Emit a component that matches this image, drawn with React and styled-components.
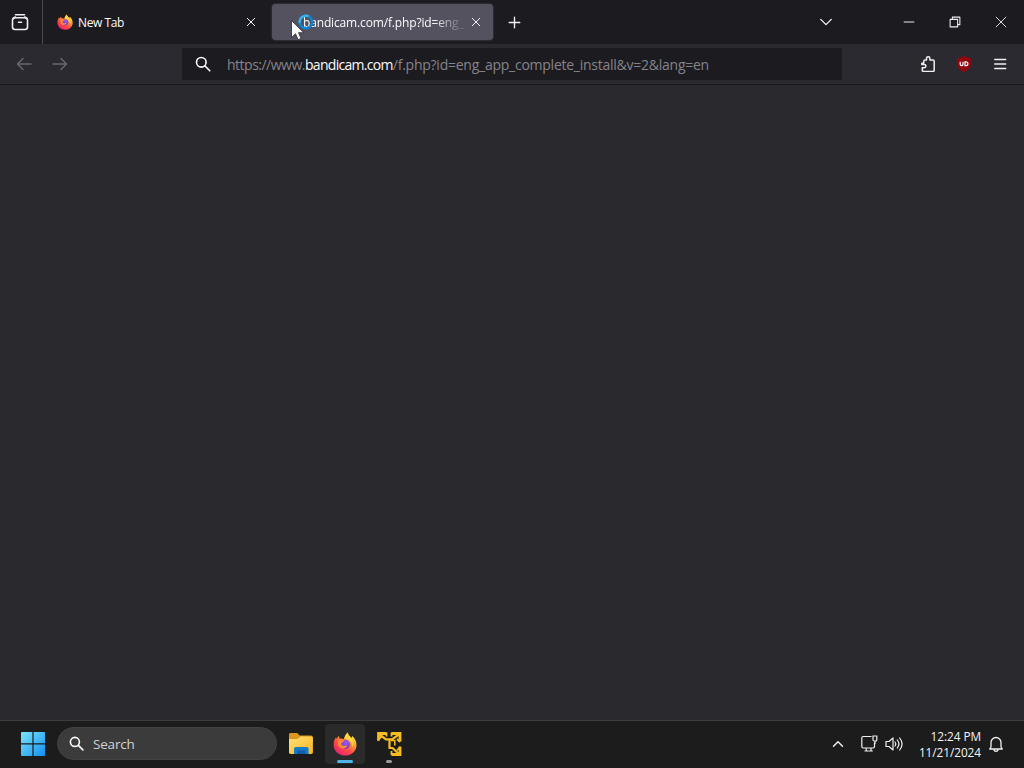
import React from "react";
import styled, { createGlobalStyle } from "styled-components";

const GlobalStyle = createGlobalStyle`
  * { box-sizing: border-box; }
  body { margin: 0; background: #2a292e; overflow: hidden; }
  svg { display: block; flex: none; }
`;

const Screen = styled.div`
  width: 1024px;
  height: 768px;
  display: flex;
  flex-direction: column;
  position: relative;
  font-family: "Open Sans", "Noto Sans", sans-serif;
  color: #fbfbfe;
  background: #2a292e;
`;

const TabBar = styled.header`
  height: 44px;
  display: flex;
  align-items: center;
  background: #1c1b20;
`;

const IconSlot = styled.div`
  width: ${(p) => p.$w}px;
  height: 100%;
  flex: none;
  display: flex;
  align-items: center;
  justify-content: center;
  color: ${(p) => p.$color || "#f0f0f2"};
`;

const ViewSlot = styled(IconSlot)`
  border-right: 1px solid #4c4b52;
  padding-right: 3px;
`;

const Tab = styled.div`
  width: 221px;
  height: 36px;
  margin-left: ${(p) => p.$gap}px;
  padding: 0 ${(p) => p.$end}px 0 ${(p) => p.$indent}px;
  display: flex;
  align-items: center;
  border-radius: 4px;
  background: ${(p) => (p.$active ? "#53525e" : "transparent")};
  box-shadow: ${(p) => (p.$active ? "0 0 2px #5c5b66" : "none")};
`;

const TabLabel = styled.span`
  flex: 1;
  margin-left: ${(p) => p.$gap || 0}px;
  padding-top: 2px;
  font-size: 12px;
  line-height: 18px;
  letter-spacing: ${(p) => p.$spacing || 0}px;
  white-space: nowrap;
  mask-image: ${(p) => (p.$fade ? "linear-gradient(to right, #000 80%, rgba(0, 0, 0, 0.15) 97%)" : "none")};
`;

const Spacer = styled.div`
  flex: 1;
`;

const NavBar = styled.nav`
  height: 41px;
  display: flex;
  align-items: center;
  padding-left: 6px;
  padding-right: 6px;
  background: #2b2a30;
  border-bottom: 1px solid #1a191d;
`;

const AddressBar = styled.div`
  width: 660px;
  height: 32px;
  margin-left: 104px;
  padding-left: 13px;
  display: flex;
  align-items: center;
  background: #1c1b20;
`;

const Url = styled.span`
  margin-left: 16px;
  padding-top: 2px;
  font-size: 14px;
  line-height: 20px;
  letter-spacing: -0.25px;
  white-space: nowrap;
  color: #85848a;
`;

const Scheme = styled.span`
  letter-spacing: -0.5px;
`;

const Host = styled.span`
  letter-spacing: -0.7px;
  color: #fbfbfe;
`;

const Page = styled.main`
  flex: 1;
  background: #2a292e;
`;

const Taskbar = styled.footer`
  height: 48px;
  display: flex;
  align-items: center;
  padding-left: 21px;
  padding-bottom: 2px;
  background: #1c1c1c;
  border-top: 1px solid #3d3d40;
`;

const SearchBox = styled.div`
  width: 220px;
  height: 33px;
  margin-left: 12px;
  margin-right: 4px;
  padding-left: 11px;
  display: flex;
  align-items: center;
  border-radius: 17px;
  background: #3b3b3b;
  border: 1px solid #424242;
`;

const SearchLabel = styled.span`
  margin-left: 9px;
  font-size: 13.5px;
  line-height: 20px;
  letter-spacing: -0.2px;
  color: #d2d2d2;
`;

const AppButton = styled.div`
  width: 40px;
  height: 40px;
  margin-left: ${(p) => p.$gap || 0}px;
  display: flex;
  align-items: center;
  justify-content: center;
  position: relative;
  border-radius: 4px;
  background: ${(p) => (p.$active ? "#2a2a2b" : "transparent")};
`;

const Indicator = styled.i`
  position: absolute;
  bottom: 1px;
  left: 50%;
  width: ${(p) => p.$w}px;
  height: 3px;
  margin-left: ${(p) => -p.$w / 2}px;
  border-radius: 2px;
  background: ${(p) => p.$color};
`;

const Clock = styled.div`
  width: 73px;
  display: flex;
  flex-direction: column;
  align-items: flex-end;
  font-size: 11.8px;
  line-height: 16px;
  letter-spacing: -0.05px;
  white-space: nowrap;
  color: #f5f5f5;
`;

const Pointer = styled.svg`
  position: absolute;
  left: 290px;
  top: 13px;
`;

const Stroke = ({ size = 16, w = 1.4, children, ...rest }) => (
  <svg width={size} height={size} viewBox="0 0 16 16" fill="none" stroke="currentColor" strokeWidth={w} strokeLinecap="round" strokeLinejoin="round" {...rest}>
    {children}
  </svg>
);

const Firefox = ({ size, id }) => (
  <svg width={size} height={size} viewBox="0 0 24 24">
    <defs>
      <linearGradient id={`${id}a`} x1="0.85" y1="0.05" x2="0.2" y2="0.95">
        <stop offset="0" stopColor="#fff04a" />
        <stop offset="0.35" stopColor="#ff9a32" />
        <stop offset="0.65" stopColor="#ff4b46" />
        <stop offset="1" stopColor="#e52076" />
      </linearGradient>
      <radialGradient id={`${id}b`} cx="0.6" cy="0.3" r="0.8">
        <stop offset="0" stopColor="#a456f4" />
        <stop offset="1" stopColor="#593dce" />
      </radialGradient>
    </defs>
    <path fill={`url(#${id}a)`} d="M14.8 0.6c.3 2.3 1.4 3.3 3 4.7l1.1 1c-.1-1 0-1.600.3-2.200 2.700 2.300 4.300 5.300 4.300 8.900 0 6-4.800 10.600-11.300 10.600C5.500 23.600.6 18.800.6 12.700c0-3.200 1-5.600 2.500-7.500l.4 1.900C4.300 5.600 5 4.700 6 4c0 .9.200 1.700.7 2.500 1.600-.2 2.900 0 4.100.7.700-2.600 1.800-5 4-6.600z" />
    <circle cx="12.500" cy="12.300" r="4.500" fill={`url(#${id}b)`} />
    <path fill="#ff8a32" d="M5.300 8.400c2-.900 3.900-.9 6.100-.1-.7 1.700-1.900 2.200-3 2.500l.1 1.600c.4 1.400 1.900 1.700 3.500 1.300 1.100-.3 1.800-.2 2.200.3-1.200 2.200-3.900 3.200-6.500 2-2.600-1.300-3.600-4.400-2.400-7.600z" />
    <path fill="#ffd43d" d="M14.800.6c.3 2.300 1.400 3.300 3 4.700 2.900 2.500 3.600 6.200 1.600 9.500.1-3.200-1.300-5.300-4-6.900-1.600-1-2.900-1-3.900-.900.300-2.700 1.600-5 3.300-6.400z" />
  </svg>
);

const FirefoxView = () => (
  <svg width="18" height="18" viewBox="0 0 18 18" fill="none" stroke="currentColor" strokeWidth="1.600" strokeLinecap="round">
    <path d="M4.500 1.800h9" />
    <rect x="1.500" y="4.700" width="15" height="11.800" rx="2.500" />
    <path d="M2.300 5.500 4.200 4M15.700 5.500 13.800 4" />
    <path d="M7.500 9.200h3" />
  </svg>
);

const Magnifier = ({ size, w }) => (
  <Stroke size={size} w={w}>
    <circle cx="6.300" cy="6.300" r="4.800" />
    <path d="m10 10 4.800 4.800" />
  </Stroke>
);

const Windows = () => (
  <svg width="24" height="24" viewBox="0 0 24 24">
    <defs>
      <linearGradient id="win" x1="0" y1="0" x2="1" y2="1">
        <stop offset="0" stopColor="#7be5fb" />
        <stop offset="1" stopColor="#128ff0" />
      </linearGradient>
    </defs>
    <path fill="url(#win)" d="M1 0h10.400v11.300H0V1a1 1 0 0 1 1-1zM12.600 0H23a1 1 0 0 1 1 1v10.300H12.600zM0 12.500h11.400V24H1a1 1 0 0 1-1-1zM12.600 12.500H24V23a1 1 0 0 1-1 1H12.600z" />
  </svg>
);

const Folder = () => (
  <svg width="26" height="24" viewBox="0 0 26 24">
    <defs>
      <linearGradient id="folder" x1="0" y1="0" x2="1" y2="1">
        <stop offset="0" stopColor="#ffe178" />
        <stop offset="1" stopColor="#fbb51f" />
      </linearGradient>
    </defs>
    <path fill="#dc971d" d="M2.500 1h6.800l2.400 2.500H23c1 0 1.800.8 1.800 1.800V10H1V2.500C1 1.700 1.700 1 2.500 1z" />
    <path fill="url(#folder)" d="M1 7h7.500c1 0 1.700-.4 2.400-1.100L12.300 4.500H23c1 0 1.900.8 1.900 1.800v14c0 1-.8 1.700-1.700 1.700H2.700C1.700 22 1 21.300 1 20.300z" />
    <path fill="#177bc9" d="M6 22v-5c0-1.200.9-2 2-2h10.600c1.200 0 2 .8 2 2v5z" />
    <path fill="#0d5fa8" d="M9 18.500h8.500V22H9z" />
  </svg>
);

const ArrowsApp = () => (
  <svg width="26" height="26" viewBox="0 0 26 26" fill="none" stroke="#f7bd20" strokeWidth="2.800">
    <path d="M2.500 9.500V2.500H10.500M15.500 2.500H24V10.500M24 15.500V23.500H15.500" />
    <path d="M3.500 3.500 10 8.300H16L23 3.500" strokeWidth="2.200" />
    <path d="M13.500 9v8h3l6.500 6" strokeWidth="2.200" />
    <path d="M15 9.500h3.800v5" strokeWidth="1.500" />
    <path d="m1.500 9.500 4-4M10.500 1.500v4M15.500 1.500v4M24 11l-3-3M24 16l-3 3.500M15.500 24v-4" strokeWidth="1.800" />
  </svg>
);

const PointerBusy = () => (
  <Pointer width="26" height="28" viewBox="0 0 26 28">
    <circle cx="16" cy="9" r="6.300" fill="none" stroke="#0c83d6" strokeWidth="2.500" />
    <path d="M9.700 10a6.300 6.300 0 0 1 9-6.700" fill="none" stroke="#38b4ee" strokeWidth="2.200" />
    <path d="M1.500 7.500v17l4-3.700 2.600 5.900 3-1.300-2.600-5.700h5.300z" fill="#fff" stroke="#28272c" strokeWidth=".8" />
  </Pointer>
);

export default function App() {
  return (
    <Screen>
      <GlobalStyle />
      <TabBar>
        <ViewSlot $w={43}><FirefoxView /></ViewSlot>
        <Tab $gap={4} $indent={10} $end={12}>
          <Firefox size={16} id="t" />
          <TabLabel $gap={5} $spacing={-0.4}>New Tab</TabLabel>
          <Stroke size={10} w={1.600}><path d="m2 2 12 12M14 2 2 14" /></Stroke>
        </Tab>
        <Tab $active $gap={4} $indent={31} $end={6}>
          <TabLabel $fade $spacing={-0.15}>bandicam.com/f.php?id=eng_</TabLabel>
          <IconSlot $w={22}><Stroke size={10} w={1.600}><path d="m2 2 12 12M14 2 2 14" /></Stroke></IconSlot>
        </Tab>
        <IconSlot $w={43}><Stroke size={13} w={1.700}><path d="M8 1.500v13M1.500 8h13" /></Stroke></IconSlot>
        <Spacer />
        <IconSlot $w={30}><Stroke size={14} w={1.600}><path d="m2 5 6 6 6-6" /></Stroke></IconSlot>
        <IconSlot $w={45} />
        <IconSlot $w={46}><Stroke size={12} w={1.300}><path d="M1.500 8h13" /></Stroke></IconSlot>
        <IconSlot $w={46}><Stroke size={12} w={1.400}><path d="M1.500 4.500h10v10h-10zM4.500 4.500v-3h10v10h-3" /></Stroke></IconSlot>
        <IconSlot $w={46}><Stroke size={12} w={1.200}><path d="m1.500 1.500 13 13M14.500 1.500l-13 13" /></Stroke></IconSlot>
      </TabBar>
      <NavBar>
        <IconSlot $w={36} $color="#68676d"><Stroke w={1.500}><path d="M15 8H1.500M7 2.500 1.500 8 7 13.500" /></Stroke></IconSlot>
        <IconSlot $w={36} $color="#68676d"><Stroke w={1.500}><path d="M1 8h13.500M9 2.500l5.500 5.500L9 13.500" /></Stroke></IconSlot>
        <AddressBar>
          <Magnifier size={16} w={1.600} />
          <Url><Scheme>https://www.</Scheme><Host>bandicam.com</Host>/f.php?id=eng_app_complete_install&amp;v=2&amp;lang=en</Url>
        </AddressBar>
        <Spacer />
        <IconSlot $w={36}>
          <Stroke w={1.500}>
            <path d="M6.500 4V2.500a1.700 1.700 0 0 1 3.400 0V4h3c.8 0 1.300.5 1.300 1.300v8.900c0 .7-.5 1.200-1.200 1.200H3.500c-.7 0-1.200-.5-1.200-1.200v-2.500h2a1.600 1.600 0 0 0 0-3.200h-2.500V7.200h2V5.300c0-.8.500-1.300 1.300-1.300z" />
          </Stroke>
        </IconSlot>
        <IconSlot $w={36}>
          <svg width="16" height="16" viewBox="0 0 16 16">
            <path fill="#93060e" d="M8 0c2 1.300 4 1.800 6.800 2v5.500c0 4-2.500 6.800-6.800 8.500-4.300-1.700-6.800-4.500-6.800-8.500V2C4 1.800 6 1.300 8 0z" />
            <path d="M4.200 5.800v2.400a1.400 1.400 0 0 0 2.800 0V5.800M9 5.800v3.800h1a1.900 1.900 0 0 0 0-3.800z" fill="none" stroke="#fff" strokeWidth="1.200" />
          </svg>
        </IconSlot>
        <IconSlot $w={36}><Stroke size={14} w={1.600}><path d="M2 2.800h12.500M2 8h12.500M2 13.200h12.500" /></Stroke></IconSlot>
      </NavBar>
      <Page />
      <Taskbar>
        <Windows />
        <SearchBox>
          <Magnifier size={15} w={1.700} />
          <SearchLabel>Search</SearchLabel>
        </SearchBox>
        <AppButton><Folder /></AppButton>
        <AppButton $gap={4} $active><Firefox size={24} id="b" /><Indicator $w={16} $color="#4cb5e8" /></AppButton>
        <AppButton $gap={4}><ArrowsApp /><Indicator $w={6} $color="#9b9b9b" /></AppButton>
        <Spacer />
        <IconSlot $w={32}><Stroke size={12} w={1.900}><path d="m2 11 6-6 6 6" /></Stroke></IconSlot>
        <IconSlot $w={31}>
          <svg width="17" height="17" viewBox="0 0 17 17" fill="none" stroke="currentColor" strokeWidth="1.200">
            <path d="M10.500 1.500H2.200c-.9 0-1.400.5-1.400 1.400v8.700c0 .9.500 1.400 1.400 1.400h9.900c.9 0 1.400-.5 1.400-1.400V7.500M5.200 13v2.800M10 13v2.800M3.500 16h8.300M12 1h3.800v3.800c0 .8-.5 1.200-1.200 1.200h-1.400c-.8 0-1.200-.4-1.200-1.200zM14 6v3" />
          </svg>
        </IconSlot>
        <IconSlot $w={18}>
          <svg width="18" height="16" viewBox="0 0 18 16" fill="none" stroke="currentColor" strokeWidth="1.200" strokeLinecap="round" strokeLinejoin="round">
            <path d="M1 5.500h3L8 2v12l-4-3.500H1zM10 6c1 1.300 1 2.700 0 4M12.300 4c2 2.500 2 5.500 0 8M14.700 2c3 3.800 3 8.200 0 12" />
          </svg>
        </IconSlot>
        <IconSlot $w={5} />
        <Clock><span>12:24 PM</span><span>11/21/2024</span></Clock>
        <IconSlot $w={30}>
          <Stroke size={16} w={1.300}><path d="M3 11V6.500a5 5 0 0 1 10 0V11l1.300 2H1.700zM6 13.300a2 2 0 0 0 4 0" /></Stroke>
        </IconSlot>
        <IconSlot $w={13} />
      </Taskbar>
      <PointerBusy />
    </Screen>
  );
}
